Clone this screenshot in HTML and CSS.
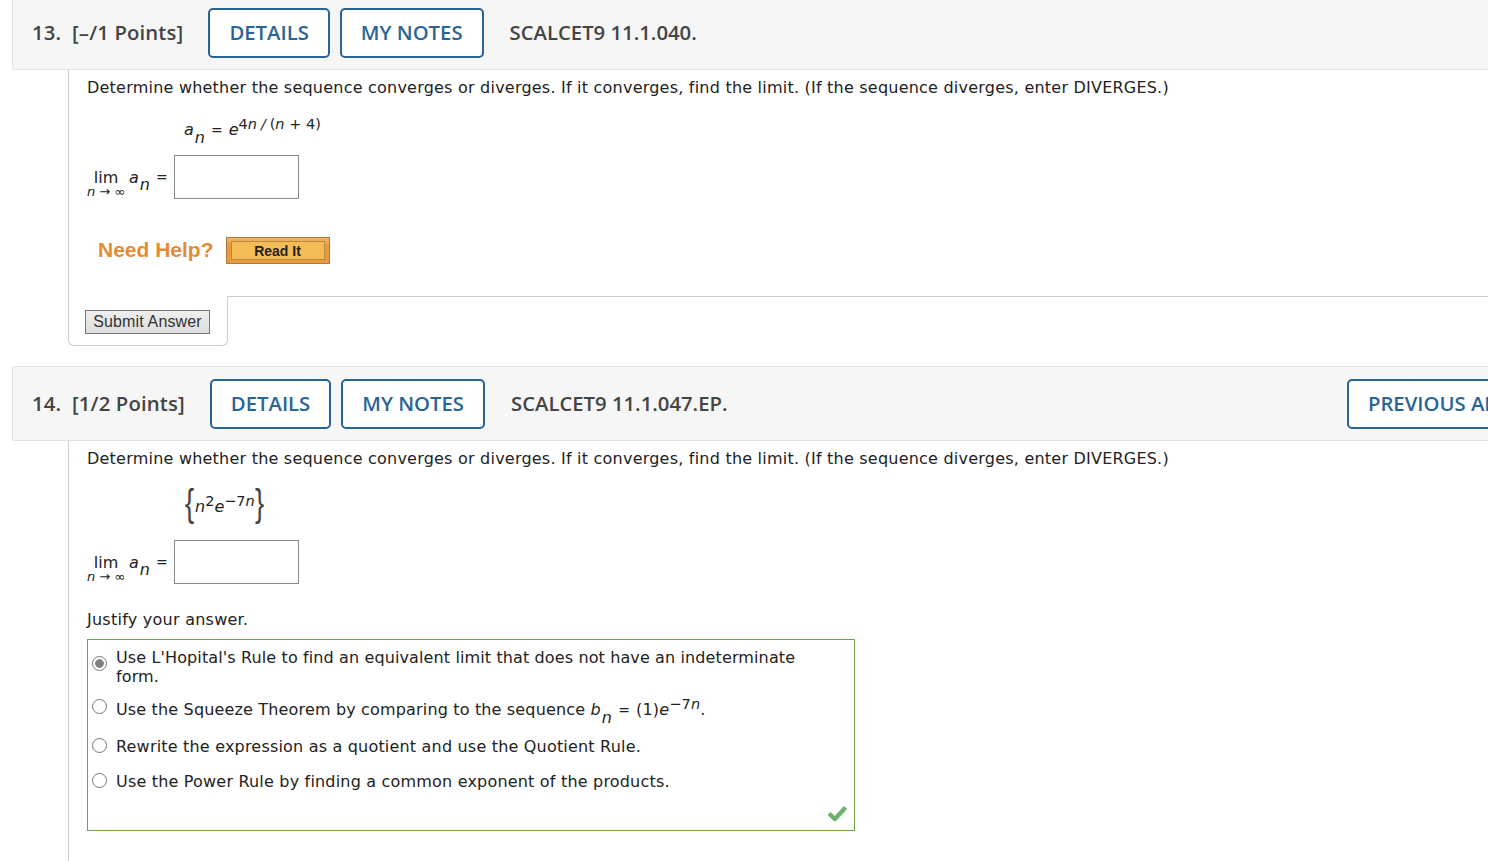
FILE: index.html
```html
<!DOCTYPE html>
<html>
<head>
    <meta charset="utf-8">
    <title>Assignment</title>
    <link rel="stylesheet" href="styles.css">
</head>
<body>

<div class="page">
    <!-- question 13 -->
    <div class="q-head">
        <span class="q-points">13.&nbsp; [&ndash;/1 Points]</span>
        <a class="q-btn">DETAILS</a>
        <a class="q-btn">MY NOTES</a>
        <span class="q-code">SCALCET9 11.1.040.</span>
    </div>
    <div class="q-body q-body-short">
        <div class="q-text">Determine whether the sequence converges or diverges. If it converges, find the limit. (If the sequence diverges, enter DIVERGES.)</div>
        <div class="formula formula-13">
            <i>a</i><i class="sub">n</i><span class="eq">=</span><i>e</i><span class="sup">4<i>n</i><span class="slash">/</span>(<i>n</i> + 4)</span>
        </div>
        <div class="answer-row">
            <span class="lim"><span class="lim-top">lim</span><span class="lim-under"><i>n</i> &rarr; &infin;</span></span>
            <i class="lim-a">a</i><i class="sub">n</i><span class="eq">=</span>
            <input class="answer" type="text">
        </div>
        <div class="help">
            <span class="help-label">Need Help?</span>
            <a class="read-it"><span>Read It</span></a>
        </div>
    </div>
    <div class="submit-row">
        <div class="submit-tab"><button class="submit">Submit Answer</button></div>
        <div class="submit-rule"></div>
    </div>

    <!-- question 14 -->
    <div class="q-head q-head-14">
        <span class="q-points">14.&nbsp; [1/2 Points]</span>
        <a class="q-btn">DETAILS</a>
        <a class="q-btn">MY NOTES</a>
        <span class="q-code">SCALCET9 11.1.047.EP.</span>
        <a class="q-btn q-btn-prev">PREVIOUS ANSWERS</a>
    </div>
    <div class="q-body q-body-last">
        <div class="q-text">Determine whether the sequence converges or diverges. If it converges, find the limit. (If the sequence diverges, enter DIVERGES.)</div>
        <div class="formula formula-14">
            <span class="brace">{</span><i>n</i><span class="sup">2</span><i>e</i><span class="sup">&minus;7<i>n</i></span><span class="brace">}</span>
        </div>
        <div class="answer-row">
            <span class="lim"><span class="lim-top">lim</span><span class="lim-under"><i>n</i> &rarr; &infin;</span></span>
            <i class="lim-a">a</i><i class="sub">n</i><span class="eq">=</span>
            <input class="answer" type="text">
        </div>
        <div class="justify">Justify your answer.</div>
        <div class="choices">
            <label class="choice choice-first"><input type="radio" name="q14" checked><span>Use L'Hopital's Rule to find an equivalent limit that does not have an indeterminate form.</span></label>
            <label class="choice choice-second"><input type="radio" name="q14"><span>Use the Squeeze Theorem by comparing to the sequence <i>b</i><i class="sub">n</i><span class="eq">=</span>(1)<i>e</i><span class="sup">&minus;7<i>n</i></span>.</span></label>
            <label class="choice choice-third"><input type="radio" name="q14"><span>Rewrite the expression as a quotient and use the Quotient Rule.</span></label>
            <label class="choice choice-fourth"><input type="radio" name="q14"><span>Use the Power Rule by finding a common exponent of the products.</span></label>
            <svg class="check" width="20" height="17" viewBox="0 0 20 17"><path d="M2 9.5 L8 15 L18.5 3.5" fill="none" stroke="#6cb26c" stroke-width="4.4"/></svg>
        </div>
    </div>
</div>

</body>
</html>
```

FILE: styles.css
```css
html, body {
    margin: 0;
    height: 100%;
    overflow: hidden;
    background: #fff;
}

.page {
    width: 1488px;
    margin-top: -5px;
    font-family: "DejaVu Sans", Verdana, sans-serif;
    font-size: 16px;
    color: #222;
}

/* question header bar */
.q-head {
    display: flex;
    align-items: center;
    height: 75px;
    box-sizing: border-box;
    margin-left: 12px;
    padding-left: 19px;
    background: #f6f6f6;
    border: 1px solid #e2e2e2;
    border-right: 0;
    border-radius: 3px 0 0 3px;
    font-family: "Open Sans", sans-serif;
    font-size: 20.3px;
    white-space: nowrap;
    overflow: hidden;
}

.q-points {
    flex: none;
    font-weight: 600;
    letter-spacing: .15px;
    color: #444;
    margin: 0 25px 2px 0;
}

.q-btn {
    flex: none;
    box-sizing: border-box;
    height: 50px;
    line-height: 44px;
    padding: 0 19px;
    margin-right: 10px;
    border: 2px solid #2a6496;
    border-radius: 5px;
    color: #2a6496;
    font-weight: 600;
    background: #fff;
}

.q-code {
    flex: none;
    font-weight: 600;
    color: #444;
    margin: 0 0 2px 16px;
}

.q-btn-prev {
    margin-left: auto;
    margin-right: -99px;
}

/* question body */
.q-body {
    margin-left: 68px;
    padding-left: 18px;
    border-left: 1px solid #ccc;
}

.q-body-short {
    height: 226px;
    box-sizing: border-box;
}

.q-body-last {
    padding-bottom: 40px;
}

.q-text {
    padding-top: 8px;
    line-height: 20px;
    letter-spacing: .22px;
}

.formula {
    padding-left: 97px;
}

.formula-13 {
    padding-top: 20px;
    line-height: 24px;
    height: 29px;
}

.formula-14 {
    height: 44px;
    padding-top: 19px;
    padding-left: 98px;
    line-height: 38px;
}

.sub {
    vertical-align: -8px;
    line-height: 0;
    margin-left: 1px;
}

.sup {
    font-size: 14.5px;
    vertical-align: 6px;
    line-height: 0;
}

.slash {
    margin: 0 4px;
    font-size: 14px;
    font-style: italic;
}

.eq {
    font-size: 14px;
    margin: 0 6px;
}

.brace {
    display: inline-block;
    width: 10px;
    font-family: "Liberation Sans", sans-serif;
    font-size: 38px;
    font-weight: normal;
    line-height: 0;
    vertical-align: -4px;
    color: #444;
    transform: scaleX(.72);
    transform-origin: left center;
}

.answer-row {
    display: flex;
    align-items: center;
    height: 44px;
    margin-top: 8px;
}

.lim {
    display: inline-flex;
    flex-direction: column;
    align-items: center;
    width: 38px;
    margin-right: 4px;
    margin-top: 14px;
}

.lim-top {
    line-height: 16px;
}

.lim-under {
    font-size: 13px;
    line-height: 12px;
    white-space: nowrap;
}

.answer-row .sub {
    margin-top: 16px;
    line-height: 16px;
    vertical-align: baseline;
}

.answer {
    box-sizing: border-box;
    width: 125px;
    height: 44px;
    border: 1px solid #888;
    background: #fff;
    padding: 0;
}

/* need help */
.help {
    display: flex;
    align-items: center;
    margin-top: 36px;
    padding-left: 11px;
}

.help-label {
    font-family: "Liberation Sans", Arial, sans-serif;
    font-weight: bold;
    font-size: 21px;
    color: #e38c35;
    margin-right: 12px;
}

.read-it {
    box-sizing: border-box;
    display: block;
    width: 104px;
    height: 27px;
    margin-top: 2px;
    padding: 3px 4px;
    background: linear-gradient(#f3b568, #e99a3f 30%);
    border: 1px solid #ad7a37;
}

.read-it span {
    display: block;
    box-sizing: border-box;
    height: 19px;
    line-height: 18px;
    text-align: center;
    font-family: "Liberation Sans", Arial, sans-serif;
    font-weight: bold;
    font-size: 14px;
    color: #222;
    background: #f5bd57;
    border: 1px solid #b98a3e;
}

/* submit tab */
.submit-row {
    display: flex;
    align-items: flex-start;
    margin-left: 68px;
    height: 70px;
}

.submit-tab {
    box-sizing: border-box;
    width: 160px;
    height: 50px;
    padding: 14px 0 0 16px;
    border: 1px solid #ccc;
    border-top: 0;
    border-radius: 0 0 6px 6px;
}

.submit-rule {
    flex: 1;
    border-top: 1px solid #ccc;
}

.submit {
    box-sizing: border-box;
    width: 125px;
    height: 24px;
    padding: 0;
    font-family: "Liberation Sans", Arial, sans-serif;
    font-size: 16px;
    letter-spacing: .15px;
    color: #333;
    background: linear-gradient(#efefef, #dcdcdc);
    border: 1px solid #777;
    border-radius: 0;
}

/* justify + radio choices */
.justify {
    margin-top: 26px;
    line-height: 20px;
    letter-spacing: .25px;
}

.choices {
    position: relative;
    box-sizing: border-box;
    width: 768px;
    height: 192px;
    margin-top: 9px;
    padding: 8px 0 0 4px;
    border: 1px solid #6ea544;
}

.choice {
    display: flex;
    align-items: flex-start;
    width: 710px;
    line-height: 19px;
    letter-spacing: .16px;
}

.choice input {
    appearance: none;
    box-sizing: border-box;
    flex: none;
    width: 15px;
    height: 15px;
    margin: 8px 9px 0 0;
    border: 1px solid #777;
    border-radius: 50%;
    background: #fff;
}

.choice input:checked {
    background: radial-gradient(circle, #808080 0 4px, #fff 4.6px);
}

.choice-first {
    letter-spacing: .12px;
}

.choice-second {
    margin-top: 14px;
}

.choice-second input {
    margin-top: -1px;
}

.choice-third input,
.choice-fourth input {
    margin-top: 1px;
}

.choice-third {
    margin-top: 17px;
    letter-spacing: .19px;
}

.choice-fourth {
    margin-top: 16px;
    letter-spacing: .19px;
}

.check {
    position: absolute;
    right: 7px;
    bottom: 9px;
}
```
